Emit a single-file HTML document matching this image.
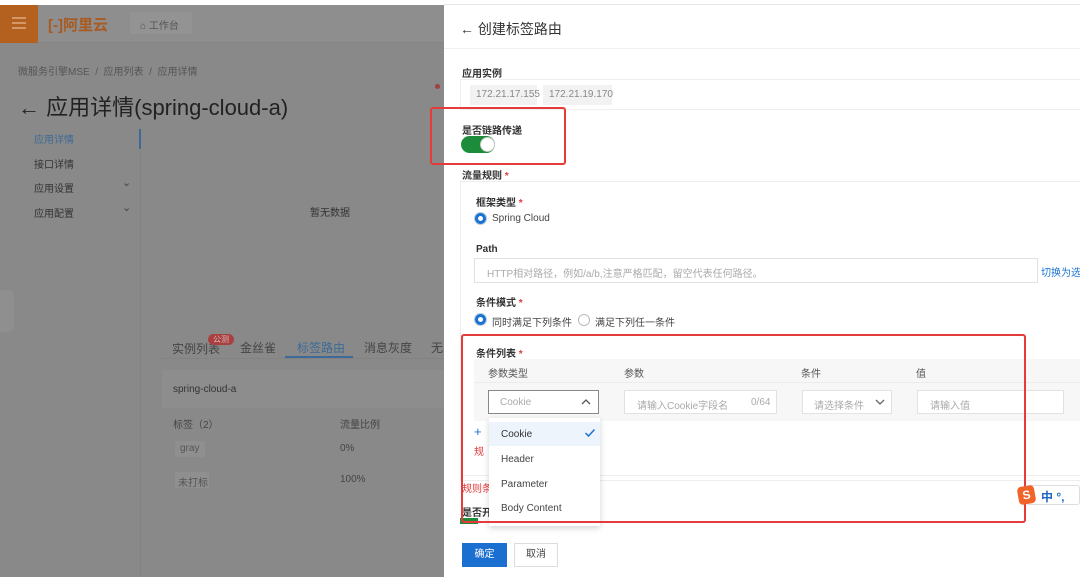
<!DOCTYPE html>
<html><head><meta charset="utf-8"><style>
*{margin:0;padding:0;box-sizing:border-box}
body{width:1080px;height:577px;overflow:hidden;position:relative;background:#898989;font-family:"Liberation Sans","Noto Sans CJK SC",sans-serif;color:#222}
.a{position:absolute;white-space:nowrap}
.dr{position:absolute;left:444px;top:0;width:636px;height:577px;background:#fff}
.lbl{font-size:10px;font-weight:bold;color:#333}
.red{color:#e03b3b}
.box{position:absolute;border:1px solid #e2e2e2;background:#fff}
.ph{font-size:10px;color:#aaa}
</style></head><body>
<div class="a" style="left:0;top:0;width:444px;height:5px;background:#fff"></div>
<div class="a" style="left:0;top:5px;width:444px;height:38px;background:#8e8e8e;border-bottom:1px solid #858585"></div>
<div class="a" style="left:0;top:5px;width:38px;height:38px;background:#b4611f"></div>
<div class="a" style="left:12px;top:17px;width:14px;height:2px;background:#d49868;box-shadow:0 5px 0 #d49868,0 10px 0 #d49868"></div>
<div class="a" style="left:48px;top:14px;font-size:15px;font-weight:bold;color:#a85a20">[-]阿里云</div>
<div class="a" style="left:130px;top:12px;width:62px;height:22px;background:#939393"></div>
<div class="a" style="left:140px;top:17px;font-size:10px;color:#555">⌂ 工作台</div>
<div class="a" style="left:18px;top:63px;font-size:10px;color:#555">微服务引擎MSE &nbsp;/&nbsp; 应用列表 &nbsp;/&nbsp; 应用详情</div>
<div class="a" style="left:18px;top:90px;font-size:22px;color:#222">← 应用详情(spring-cloud-a)</div>
<div class="a" style="left:140px;top:128px;width:1px;height:449px;background:#838383"></div>
<div class="a" style="left:139px;top:129px;width:2px;height:20px;background:#3d6a96"></div>
<div class="a" style="left:34px;top:131px;font-size:10px;color:#3d6a96">应用详情</div>
<div class="a" style="left:34px;top:156px;font-size:10px;color:#333">接口详情</div>
<div class="a" style="left:34px;top:180px;font-size:10px;color:#333">应用设置</div>
<div class="a" style="left:122px;top:176px;font-size:11px;color:#444">⌄</div>
<div class="a" style="left:34px;top:205px;font-size:10px;color:#333">应用配置</div>
<div class="a" style="left:122px;top:201px;font-size:11px;color:#444">⌄</div>
<div class="a" style="left:310px;top:204px;font-size:10px;color:#333">暂无数据</div>
<div class="a" style="left:0;top:290px;width:14px;height:42px;background:#8f8f8f;border-radius:0 6px 6px 0"></div>
<div class="a" style="left:172px;top:340px;font-size:12px;color:#444">实例列表</div>
<div class="a" style="left:208px;top:334px;width:26px;height:11px;background:#a84040;border-radius:6px;font-size:8px;color:#dbb;text-align:center">公测</div>
<div class="a" style="left:240px;top:339px;font-size:12px;color:#444">金丝雀</div>
<div class="a" style="left:297px;top:339px;font-size:12px;color:#3d6a96">标签路由</div>
<div class="a" style="left:285px;top:356px;width:68px;height:2px;background:#3d6a96"></div>
<div class="a" style="left:364px;top:339px;font-size:12px;color:#444">消息灰度</div>
<div class="a" style="left:431px;top:339px;font-size:12px;color:#444">无</div>
<div class="a" style="left:160px;top:358px;width:284px;height:1px;background:#838383"></div>
<div class="a" style="left:162px;top:370px;width:282px;height:38px;background:#8d8d8d"></div>
<div class="a" style="left:173px;top:384px;font-size:10px;color:#333">spring-cloud-a</div>
<div class="a" style="left:173px;top:416px;font-size:10px;color:#444">标签（2）</div>
<div class="a" style="left:340px;top:416px;font-size:10px;color:#444">流量比例</div>
<div class="a" style="left:175px;top:441px;width:30px;height:16px;background:#8f8f8f"></div>
<div class="a" style="left:180px;top:443px;font-size:10px;color:#555">gray</div>
<div class="a" style="left:340px;top:443px;font-size:10px;color:#444">0%</div>
<div class="a" style="left:175px;top:472px;width:34px;height:16px;background:#8f8f8f"></div>
<div class="a" style="left:178px;top:474px;font-size:10px;color:#555">未打标</div>
<div class="a" style="left:340px;top:474px;font-size:10px;color:#444">100%</div>
<div class="a" style="left:435px;top:84px;width:5px;height:5px;border-radius:50%;background:#a04040"></div>

<div class="dr">
 <div class="a" style="left:0;top:4px;width:636px;height:1px;background:#e6e6e6"></div>
 <div class="a" style="left:16px;top:19px;font-size:14px;color:#333">← 创建标签路由</div>
 <div class="a" style="left:0;top:48px;width:636px;height:1px;background:#f0f0f0"></div>
 <div class="a lbl" style="left:18px;top:65px">应用实例</div>
 <div class="box" style="left:16px;top:79px;width:630px;height:31px;border-color:#eee"></div>
 <div class="a" style="left:26px;top:85px;width:67px;height:20px;background:#f2f2f2;font-size:10px;color:#888;padding:4px 6px">172.21.17.155</div>
 <div class="a" style="left:99px;top:85px;width:69px;height:20px;background:#f2f2f2;font-size:10px;color:#888;padding:4px 6px">172.21.19.170</div>
 <div class="a lbl" style="left:18px;top:122px">是否链路传递</div>
 <div class="a" style="left:17px;top:136px;width:34px;height:17px;border-radius:9px;background:#1d8c3a"></div>
 <div class="a" style="left:36px;top:137px;width:15px;height:15px;border-radius:50%;background:#fff;border:1px solid #ccc"></div>
 <div class="a" style="left:-14px;top:107px;width:136px;height:58px;border:2px solid #e53b3b;border-radius:3px"></div>
 <div class="a lbl" style="left:18px;top:167px">流量规则 <span class="red">*</span></div>
 <div class="box" style="left:16px;top:181px;width:630px;height:300px;border-color:#eee"></div>
 <div class="a lbl" style="left:32px;top:194px">框架类型 <span class="red">*</span></div>
 <div class="a" style="left:31px;top:213px;width:11px;height:11px;border-radius:50%;border:3px solid #1a73d0;box-shadow:0 0 0 1px #bcd"></div>
 <div class="a" style="left:48px;top:213px;font-size:10px;color:#444">Spring Cloud</div>
 <div class="a lbl" style="left:32px;top:244px">Path</div>
 <div class="box" style="left:30px;top:258px;width:564px;height:25px"></div>
 <div class="a ph" style="left:43px;top:265px">HTTP相对路径，例如/a/b,注意严格匹配，留空代表任何路径。</div>
 <div class="a" style="left:597px;top:264px;font-size:10px;color:#1a73d0">切换为选择</div>
 <div class="a lbl" style="left:32px;top:294px">条件模式 <span class="red">*</span></div>
 <div class="a" style="left:31px;top:314px;width:11px;height:11px;border-radius:50%;border:3px solid #1a73d0;box-shadow:0 0 0 1px #bcd"></div>
 <div class="a" style="left:48px;top:314px;font-size:10px;color:#444">同时满足下列条件</div>
 <div class="a" style="left:134px;top:314px;width:12px;height:12px;border-radius:50%;border:1px solid #bbb"></div>
 <div class="a" style="left:151px;top:314px;font-size:10px;color:#444">满足下列任一条件</div>
 <div class="a lbl" style="left:32px;top:345px">条件列表 <span class="red">*</span></div>
 <div class="a" style="left:30px;top:359px;width:606px;height:62px;background:#f7f7f7"></div>
 <div class="a" style="left:30px;top:382px;width:606px;height:1px;background:#ececec"></div>
 <div class="a" style="left:44px;top:365px;font-size:10px;color:#555">参数类型</div>
 <div class="a" style="left:180px;top:365px;font-size:10px;color:#555">参数</div>
 <div class="a" style="left:357px;top:365px;font-size:10px;color:#555">条件</div>
 <div class="a" style="left:472px;top:365px;font-size:10px;color:#555">值</div>
 <div class="box" style="left:44px;top:390px;width:111px;height:24px;border-color:#888"></div>
 <div class="a ph" style="left:56px;top:397px">Cookie</div>
 <svg class="a" style="left:136px;top:398px" width="12" height="8"><path d="M2 6 L6 2 L10 6" stroke="#555" stroke-width="1.3" fill="none"/></svg>
 <div class="box" style="left:180px;top:390px;width:153px;height:24px"></div>
 <div class="a ph" style="left:193px;top:397px">请输入Cookie字段名</div>
 <div class="a ph" style="left:307px;top:397px">0/64</div>
 <div class="box" style="left:358px;top:390px;width:90px;height:24px"></div>
 <div class="a ph" style="left:370px;top:397px">请选择条件</div>
 <svg class="a" style="left:430px;top:398px" width="12" height="8"><path d="M2 2 L6 6 L10 2" stroke="#666" stroke-width="1.3" fill="none"/></svg>
 <div class="box" style="left:473px;top:390px;width:147px;height:24px"></div>
 <div class="a ph" style="left:486px;top:397px">请输入值</div>
 <div class="a" style="left:30px;top:424px;font-size:13px;color:#1a73d0">+</div>
 <div class="a" style="left:30px;top:443px;font-size:10px;color:#e03b3b">规</div>
 <div class="a" style="left:16px;top:475px;width:620px;height:1px;background:#eee"></div>
 <div class="a" style="left:18px;top:480px;font-size:10px;color:#e03b3b">规则条</div>
 <div class="a lbl" style="left:18px;top:504px">是否开</div>
 <div class="a" style="left:16px;top:518px;width:18px;height:6px;background:#1d8c3a"></div>
 <div class="a" style="left:45px;top:418px;width:111px;height:108px;background:#fff;box-shadow:0 2px 6px rgba(0,0,0,.18)"></div>
 <div class="a" style="left:45px;top:422px;width:111px;height:24px;background:#eef4fb"></div>
 <div class="a" style="left:57px;top:429px;font-size:10px;color:#333">Cookie</div>
 <svg class="a" style="left:140px;top:428px" width="12" height="10"><path d="M1.5 5 L4.5 8 L10.5 1.5" stroke="#1a73d0" stroke-width="1.5" fill="none"/></svg>
 <div class="a" style="left:57px;top:454px;font-size:10px;color:#444">Header</div>
 <div class="a" style="left:57px;top:479px;font-size:10px;color:#444">Parameter</div>
 <div class="a" style="left:57px;top:503px;font-size:10px;color:#444">Body Content</div>
 <div class="a" style="left:17px;top:334px;width:565px;height:189px;border:2px solid #e53b3b;border-radius:3px"></div>
 <div class="a" style="left:582px;top:485px;width:54px;height:20px;background:#fff;border:1px solid #ddd;border-radius:3px"></div>
 <div class="a" style="left:574px;top:486px;width:17px;height:18px;background:#f0642a;border-radius:4px;transform:rotate(-10deg);color:#fff;font-size:12px;font-weight:bold;text-align:center;line-height:18px">S</div>
 <div class="a" style="left:597px;top:488px;font-size:12px;color:#1a66c0;font-weight:bold">中 °,</div>
 <div class="a" style="left:18px;top:543px;width:45px;height:24px;background:#1a6fd0;color:#fff;font-size:10px;text-align:center;line-height:24px">确定</div>
 <div class="a" style="left:70px;top:543px;width:44px;height:24px;border:1px solid #ddd;color:#444;font-size:10px;text-align:center;line-height:22px">取消</div>
</div>
</body></html>
